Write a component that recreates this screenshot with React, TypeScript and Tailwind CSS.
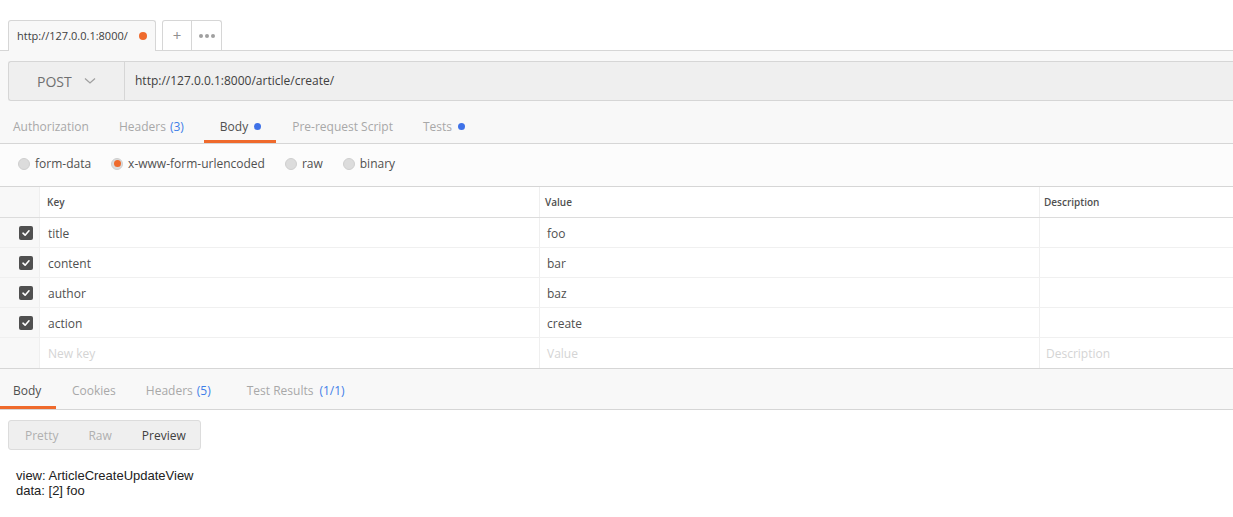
import React from "react";

const Check = () => (
  <div className="w-[14px] h-[14px] rounded-[2px] bg-[#505050] flex items-center justify-center">
    <svg width="10" height="10" viewBox="0 0 10 10">
      <path d="M2 5.2 L4.1 7.2 L8 2.8" stroke="#fff" strokeWidth="1.6" fill="none" strokeLinecap="round" strokeLinejoin="round" />
    </svg>
  </div>
);

const Radio = ({ on }: { on?: boolean }) => (
  <div className="w-[12px] h-[12px] rounded-full bg-[#dcdcdc] border border-[#cfcfcf] flex items-center justify-center">
    {on && <div className="w-[7px] h-[7px] rounded-full bg-[#ef6a2c]" />}
  </div>
);

const rows = [
  ["title", "foo"],
  ["content", "bar"],
  ["author", "baz"],
  ["action", "create"],
];

export default function App() {
  return (
    <div className="w-[1233px] h-[517px] overflow-hidden bg-white text-[#505050]" style={{ fontFamily: '"Open Sans", sans-serif' }}>
      {/* top tabs */}
      <div className="h-[51px] bg-white border-b border-[#d6d6d6] flex items-end pl-[8px] gap-[6px]">
        <div className="w-[148px] h-[31px] border border-b-0 border-[#d6d6d6] rounded-t-[3px] bg-[#f8f8f8] flex items-center justify-between pl-[8px] pr-[8px] -mb-px">
          <span className="text-[11px] text-[#404040]">http://127.0.0.1:8000/</span>
          <span className="w-[8px] h-[8px] rounded-full bg-[#ef6a2c]" />
        </div>
        <div className="h-[30px] flex border border-b-0 border-[#d6d6d6] rounded-t-[3px] bg-white">
          <div className="w-[29px] flex items-center justify-center text-[#909090] text-[15px] border-r border-[#d6d6d6]">+</div>
          <div className="w-[29px] flex items-center justify-center gap-[2px]">
            <span className="w-[4px] h-[4px] rounded-full bg-[#a0a0a0]" />
            <span className="w-[4px] h-[4px] rounded-full bg-[#a0a0a0]" />
            <span className="w-[4px] h-[4px] rounded-full bg-[#a0a0a0]" />
          </div>
        </div>
      </div>

      <div className="bg-[#f8f8f8]">
        {/* url bar */}
        <div className="pt-[10px] pb-[8px] pl-[8px]">
          <div className="h-[40px] flex border border-r-0 border-[#d6d6d6] rounded-l-[3px] bg-[#efefef]">
            <div className="w-[116px] flex items-center pl-[28px] gap-[12px] border-r border-[#d6d6d6]">
              <span className="text-[14px] text-[#707070]">POST</span>
              <svg width="12" height="8" viewBox="0 0 12 8">
                <path d="M1 1.5 L6 6 L11 1.5" stroke="#a0a0a0" strokeWidth="1.3" fill="none" />
              </svg>
            </div>
            <div className="flex items-center pl-[10px] text-[12px] text-[#404040]">http://127.0.0.1:8000/article/create/</div>
          </div>
        </div>

        {/* request tabs */}
        <div className="h-[35px] flex items-stretch border-b border-[#d6d6d6] text-[12px] text-[#a8a8a8]">
          <div className="pl-[13px] pr-[30px] flex items-center pt-[1px]">Authorization</div>
          <div className="pr-[20px] flex items-center pt-[1px]">Headers<span className="ml-[4px] text-[#3f7ee8]">(3)</span></div>
          <div className="pl-[16px] pr-[15px] flex items-center text-[#505050] border-b-[3px] border-[#ef6a2c] pt-[4px]">
            Body<span className="ml-[6px] w-[7px] h-[7px] rounded-full bg-[#3f72e8]" />
          </div>
          <div className="pl-[16px] pr-[30px] flex items-center pt-[1px]">Pre-request Script</div>
          <div className="flex items-center pt-[1px]">Tests<span className="ml-[6px] w-[7px] h-[7px] rounded-full bg-[#3f72e8]" /></div>
        </div>

        {/* radios */}
        <div className="h-[43px] bg-[#fcfcfc] border-b border-[#d6d6d6] flex items-center pl-[18px] pb-[3px] text-[12px] text-[#505050]">
          <Radio /><span className="ml-[5px] mr-[20px]">form-data</span>
          <Radio on /><span className="ml-[5px] mr-[20px]">x-www-form-urlencoded</span>
          <Radio /><span className="ml-[5px] mr-[20px]">raw</span>
          <Radio /><span className="ml-[5px]">binary</span>
        </div>

        {/* table */}
        <div className="border-b border-[#d6d6d6]">
          <div className="h-[31px] flex border-b border-[#dcdcdc] text-[10px] font-semibold text-[#505050]">
            <div className="w-[40px] border-r border-[#efefef]" />
            <div className="w-[500px] bg-white border-r border-[#efefef] flex items-center pl-[7px]">Key</div>
            <div className="w-[500px] bg-white border-r border-[#efefef] flex items-center pl-[5px]">Value</div>
            <div className="flex-1 bg-white flex items-center pl-[4px]">Description</div>
          </div>
          {rows.map(([k, v]) => (
            <div key={k} className="h-[30px] flex border-b border-[#f0f0f0] text-[12px] text-[#505050]">
              <div className="w-[40px] border-r border-[#efefef] flex items-center pl-[19px] pt-[1px]"><Check /></div>
              <div className="w-[500px] bg-white border-r border-[#efefef] flex items-center pl-[8px] pt-[2px]">{k}</div>
              <div className="w-[500px] bg-white border-r border-[#efefef] flex items-center pl-[7px] pt-[2px]">{v}</div>
              <div className="flex-1 bg-white" />
            </div>
          ))}
          <div className="h-[30px] flex text-[12px] text-[#d4d4d4]">
            <div className="w-[40px] border-r border-[#efefef]" />
            <div className="w-[500px] bg-white border-r border-[#efefef] flex items-center pl-[8px] pt-[2px]">New key</div>
            <div className="w-[500px] bg-white border-r border-[#efefef] flex items-center pl-[7px] pt-[2px]">Value</div>
            <div className="flex-1 bg-white flex items-center pl-[6px] pt-[2px]">Description</div>
          </div>
        </div>

        {/* response tabs */}
        <div className="h-[41px] flex items-stretch border-b border-[#d6d6d6] text-[12px] text-[#a8a8a8]">
          <div className="w-[56px] pl-[13px] flex items-center text-[#505050] border-b-[3px] border-[#ef6a2c] pt-[6px]">Body</div>
          <div className="pl-[16px] pr-[30px] flex items-center pt-[3px]">Cookies</div>
          <div className="pr-[36px] flex items-center pt-[3px]">Headers<span className="ml-[4px] text-[#3f7ee8]">(5)</span></div>
          <div className="flex items-center pt-[3px]">Test Results<span className="ml-[6px] text-[#3f7ee8]">(1/1)</span></div>
        </div>
      </div>

      {/* response body */}
      <div className="bg-white pl-[8px] pt-[10px]">
        <div className="w-[193px] h-[30px] rounded-[3px] border border-[#dcdcdc] bg-[#efefef] flex items-center pt-[1px] text-[12px]">
          <span className="ml-[16px] text-[#b0b0b0]">Pretty</span>
          <span className="ml-[30px] text-[#b0b0b0]">Raw</span>
          <span className="ml-[30px] text-[#404040]">Preview</span>
        </div>
        <div className="mt-[18px] ml-[8px] text-[13px] leading-[15px] text-[#222]" style={{ fontFamily: '"Liberation Sans", Arial, sans-serif' }}>
          <div>view: ArticleCreateUpdateView</div>
          <div>data: [2] foo</div>
        </div>
      </div>
    </div>
  );
}
